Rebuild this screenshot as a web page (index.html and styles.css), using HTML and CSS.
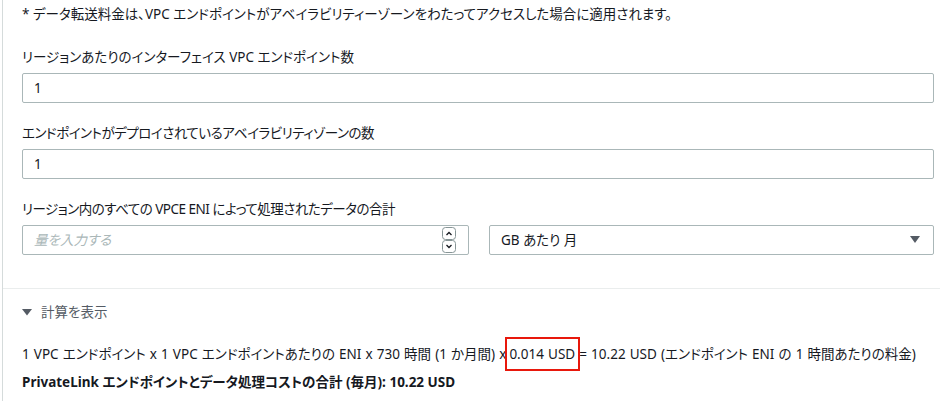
FILE: index.html
```html
<!DOCTYPE html>
<html lang="ja">
<head>
<meta charset="UTF-8">
<meta name="viewport" content="width=device-width, initial-scale=1.0">
<title>PrivateLink 料金</title>
<link rel="stylesheet" href="styles.css">
</head>
<body>
<div class="panel">
  <div class="fields">
    <p class="note">* データ転送料金は、VPC エンドポイントがアベイラビリティーゾーンをわたってアクセスした場合に適用されます。</p>

    <div class="field">
      <label>リージョンあたりのインターフェイス VPC エンドポイント数</label>
      <div class="input">1</div>
    </div>

    <div class="field">
      <label class="tight">エンドポイントがデプロイされているアベイラビリティゾーンの数</label>
      <div class="input">1</div>
    </div>

    <div class="field">
      <label class="tight">リージョン内のすべての VPCE ENI によって処理されたデータの合計</label>
      <div class="row">
        <div class="input number">
          <span class="placeholder">量を入力する</span>
          <svg class="spin" width="14" height="26" viewBox="0 0 14 26">
            <rect x="0.5" y="0.5" width="13" height="12" rx="3" fill="#fff" stroke="#879596"/>
            <rect x="0.5" y="13.5" width="13" height="12" rx="3" fill="#fff" stroke="#879596"/>
            <path d="M4.5 8 L7 5.5 L9.5 8" fill="none" stroke="#16191f" stroke-width="1.3"/>
            <path d="M4.5 18 L7 20.5 L9.5 18" fill="none" stroke="#16191f" stroke-width="1.3"/>
          </svg>
        </div>
        <div class="input select">
          <span>GB あたり 月</span>
          <svg width="10" height="8" viewBox="0 0 10 8"><path d="M0 0 H10 L5 7 Z" fill="#545b64"/></svg>
        </div>
      </div>
    </div>
  </div>

  <div class="calc">
    <div class="toggle">
      <svg width="10" height="7" viewBox="0 0 10 7"><path d="M0 0 H10 L5 6.5 Z" fill="#545b64"/></svg>
      <span>計算を表示</span>
    </div>
    <p class="formula">1 VPC エンドポイント x 1 VPC エンドポイントあたりの ENI x 730 時間 (1 か月間) x<span class="mark">0.014 USD</span> = 10.22 USD (エンドポイント ENI の 1 時間あたりの料金)</p>
    <p class="total">PrivateLink エンドポイントとデータ処理コストの合計 (毎月): 10.22 USD</p>
  </div>
</div>
</body>
</html>
```

FILE: styles.css
```css
body {
    margin: 0;
    font-family: "Noto Sans", "Noto Sans CJK JP", sans-serif;
    font-size: 13.5px;
    line-height: 20px;
    color: #16191f;
    background: #fff;
    font-feature-settings: "palt";
}

.panel {
    margin-left: 2px;
    border-left: 1px solid #d5dbdb;
    height: 401px;
}

.fields {
    padding: 4px 6px 33px 19px;
    border-bottom: 1px solid #eaeded;
}

.note {
    margin: 0;
}

.field {
    margin-top: 23px;
}

.field + .field {
    margin-top: 20px;
}

.field label {
    display: block;
    margin-bottom: 6px;
}

.field label.tight {
    letter-spacing: -0.5px;
}

.input {
    height: 28px;
    border: 1px solid #aab7b8;
    border-radius: 2px;
    padding: 0 11px;
    display: flex;
    align-items: center;
}

.row {
    display: flex;
    gap: 20px;
}

.number {
    width: 422px;
    justify-content: space-between;
    padding-right: 12px;
}

.placeholder {
    color: #aab7b8;
    font-style: italic;
}

.select {
    flex: 1;
    justify-content: space-between;
    padding-right: 13px;
}

.calc {
    padding: 13px 6px 0 19px;
}

.toggle {
    display: flex;
    align-items: center;
    gap: 9px;
    color: #545b64;
}

.formula {
    margin: 22px 0 0;
    white-space: nowrap;
    word-spacing: 0.6px;
}

.total {
    margin: 8px 0 0;
    font-weight: bold;
}

.mark {
    position: relative;
    margin-left: 3px;
}

.mark::after {
    content: "";
    position: absolute;
    left: -4px;
    right: -5px;
    top: -8px;
    bottom: -8px;
    border: 2px solid #e8180c;
}
```
